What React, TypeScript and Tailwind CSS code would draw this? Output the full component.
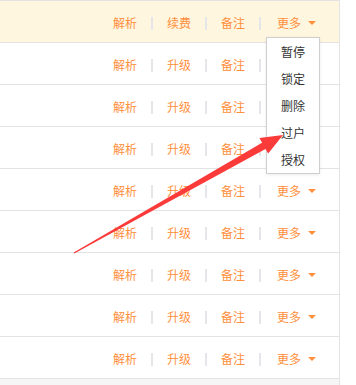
import { Fragment } from 'react';

// rows 1-3 have their "更多" hidden under the open dropdown
const rows = [
  { links: ['解析', '续费', '备注'], active: true },
  { links: ['解析', '升级', '备注'], covered: true },
  { links: ['解析', '升级', '备注'], covered: true },
  { links: ['解析', '升级', '备注'], covered: true },
  { links: ['解析', '升级', '备注'] },
  { links: ['解析', '升级', '备注'] },
  { links: ['解析', '升级', '备注'] },
  { links: ['解析', '升级', '备注'] },
  { links: ['解析', '升级', '备注'] },
];

const menuItems = ['暂停', '锁定', '删除', '过户', '授权'];

function Sep() {
  return <span className="mx-[14px] w-[2px] h-[13px] bg-[#e4e6ea]" />;
}

export default function App() {
  return (
    <div
      className="relative w-[356px] h-[385px] overflow-hidden bg-white text-[12px]"
      style={{ fontFamily: '"Noto Sans CJK SC", "Noto Sans", sans-serif' }}
    >
      {/* Table */}
      <div className="w-[340px] border-r border-[#e3e3e3]">
        <div className="h-[1px] bg-[#e3e3e3]" />
        {rows.map((row, i) => (
          <div
            key={i}
            className={`h-[42px] flex items-center justify-end pr-[23px] pt-[3px] border-b border-[#e3e3e3] ${
              row.active ? 'bg-[#fff6df]' : 'bg-white'
            }`}
          >
            {row.links.map((l) => (
              <Fragment key={l}>
                <span className="text-[#ff8f3c] leading-none">{l}</span>
                <Sep />
              </Fragment>
            ))}
            <span className={`ml-[2px] text-[#ff8f3c] leading-none ${row.covered ? 'invisible' : ''}`}>更多</span>
            <span className="ml-[7px] w-0 h-0 border-l-[4px] border-r-[4px] border-t-[4px] border-l-transparent border-r-transparent border-t-[#ff8f3c]" />
          </div>
        ))}
        <div className="h-[6px] bg-[#f6f6f6]" />
      </div>

      {/* Dropdown menu */}
      <div className="absolute left-[266px] top-[37px] w-[54px] bg-white border border-[#cfcfcf] shadow-[0_1px_3px_rgba(0,0,0,0.08)]">
        {menuItems.map((m) => (
          <div key={m} className="h-[27px] flex items-center justify-center text-[#333] leading-[16px]">
            {m}
          </div>
        ))}
      </div>

      {/* Annotation arrow */}
      <svg className="absolute left-0 top-0 pointer-events-none" width="356" height="385" viewBox="0 0 356 385">
        <polygon
          points="73.7,252.5 262.1,142.8 259.4,138 283,135 268.2,153.6 265.5,148.9 74.3,253.5"
          fill="#fb3a3a"
        />
      </svg>
    </div>
  );
}
